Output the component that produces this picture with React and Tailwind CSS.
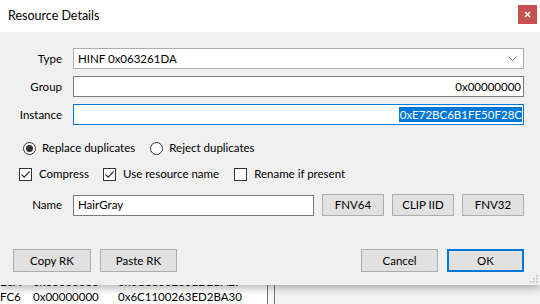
import React from 'react';

const font = { fontFamily: 'Lato, "Liberation Sans", sans-serif' };

const Field = ({ label, children }) => {
  return (
    <div className="flex items-center h-[21px]">
      <div className="w-[62px] text-right text-[11.5px] text-black">{label}</div>
      <div className="flex-1 ml-[11px] h-full">{children}</div>
    </div>
  );
};

const Radio = ({ checked, label, className }) => (
  <div className={`flex items-center ${className || ''}`}>
    <div className="w-[13px] h-[13px] rounded-full border border-[#333] bg-white flex items-center justify-center">
      {checked && <div className="w-[7px] h-[7px] rounded-full bg-[#333]" />}
    </div>
    <span className="ml-[6px] text-[11.5px] text-black">{label}</span>
  </div>
);

const Check = ({ checked, label, className }) => (
  <div className={`flex items-center ${className || ''}`}>
    <div className="w-[13px] h-[13px] border border-[#333] bg-white flex items-center justify-center">
      {checked && (
        <svg width="11" height="11" viewBox="0 0 11 11">
          <path d="M1.5 5.5 L4.2 8.2 L9.5 2.5" fill="none" stroke="#333" strokeWidth="1.2" />
        </svg>
      )}
    </div>
    <span className="ml-[7px] text-[11.5px] text-black">{label}</span>
  </div>
);

const Btn = ({ children, className, focused }) => (
  <button
    className={`h-full flex items-center justify-center text-[11.5px] text-black bg-[#e1e1e1] ${
      focused ? 'border-2 border-[#0078d7]' : 'border border-[#adadad]'
    } ${className || ''}`}
  >
    {children}
  </button>
);

const Row = ({ a, b, c }) => (
  <div className="flex items-center h-[15px] text-[11.5px] text-black whitespace-nowrap">
    <span className="w-[33px]">{a}</span>
    <span className="w-[85px]">{b}</span>
    <span className="w-[149px]">{c}</span>
    <div className="w-[1px] h-full bg-[#777]" />
    <div className="w-[6px] h-full bg-[#f7f7f7]" />
    <div className="w-[1px] h-full bg-[#777]" />
    <div className="flex-1 h-full bg-[#f3f3f3]" />
  </div>
);

export default function App() {
  return (
    <div className="relative w-[540px] h-[304px] overflow-hidden bg-white" style={font}>
      {/* window behind the dialog */}
      <div className="flex flex-col justify-end h-full pb-[-2px]">
        <Row a="E8A" b="0x00000000" c="0x6C1100263ED2BA2F" />
        <Row a="FC6" b="0x00000000" c="0x6C1100263ED2BA30" />
      </div>

      {/* dialog */}
      <div className="absolute top-0 left-0 w-[540px] h-[285px] flex flex-col bg-[#f0f0f0] shadow-[0_3px_8px_rgba(0,0,0,0.3)]">
        <div className="h-[32px] bg-white flex items-center justify-between">
          <span className="ml-[8px] text-[12.5px] text-black">Resource Details</span>
          <div className="mr-[3px] mb-[4px] w-[19px] h-[19px] bg-[#c75050] flex items-center justify-center">
            <svg width="7" height="7" viewBox="0 0 7 7">
              <path d="M1 1 L6 6 M6 1 L1 6" stroke="#fff" strokeWidth="1.6" />
            </svg>
          </div>
        </div>

        <div className="flex flex-col pr-[16px] pt-[16px]">
          <Field label="Type">
            <div className="h-full bg-white border border-[#acacac] flex items-center justify-between pl-[4px] pr-[6px]">
              <span className="text-[11.5px] text-black">HINF 0x063261DA</span>
              <svg width="9" height="5" viewBox="0 0 9 5">
                <path d="M0.5 0.5 L4.5 4.5 L8.5 0.5" fill="none" stroke="#777" strokeWidth="1" />
              </svg>
            </div>
          </Field>
          <div className="mt-[7px]">
            <Field label="Group">
              <div className="h-full bg-white border border-[#7a7a7a] flex items-center justify-end pr-[2px]">
                <span className="text-[11.5px] text-black">0x00000000</span>
              </div>
            </Field>
          </div>
          <div className="mt-[7px]">
            <Field label="Instance">
              <div className="h-full bg-white border border-[#0078d7] flex items-center justify-end pr-[1px]">
                <span className="text-[11.5px] text-white bg-[#0078d7] leading-[15px] pl-[1px]">0xE72BC6B1FE50F28C</span>
              </div>
            </Field>
          </div>

          <div className="flex items-center h-[16px] mt-[15px] pl-[23px]">
            <Radio checked label="Replace duplicates" />
            <Radio label="Reject duplicates" className="ml-[15px]" />
          </div>

          <div className="flex items-center h-[16px] mt-[10px] pl-[19px]">
            <Check checked label="Compress" />
            <Check checked label="Use resource name" className="ml-[14px]" />
            <Check label="Rename if present" className="ml-[15px]" />
          </div>

          <div className="flex items-center h-[22px] mt-[12px]">
            <div className="w-[62px] text-right text-[11.5px] text-black">Name</div>
            <div className="ml-[11px] w-[241px] h-[21px] bg-white border border-[#7a7a7a] flex items-center pl-[4px]">
              <span className="text-[11.5px] text-black">HairGray</span>
            </div>
            <Btn className="ml-[8px] w-[62px]">FNV64</Btn>
            <Btn className="ml-[8px] w-[62px]">CLIP IID</Btn>
            <Btn className="ml-[8px] w-[62px]">FNV32</Btn>
          </div>

          <div className="flex items-center h-[23px] mt-[33px] pl-[13px]">
            <Btn className="w-[78px]">Copy RK</Btn>
            <Btn className="ml-[9px] w-[77px]">Paste RK</Btn>
            <div className="flex-1" />
            <Btn className="w-[77px]">Cancel</Btn>
            <Btn focused className="ml-[9px] w-[77px]">OK</Btn>
          </div>
        </div>

        <div className="flex-1 flex justify-end items-end pr-[2px] pb-[2px]">
          <svg width="9" height="9" viewBox="0 0 9 9">
            <rect x="7" y="1" width="1.5" height="1.5" fill="#b8b8b8" />
            <rect x="4" y="4" width="1.5" height="1.5" fill="#b8b8b8" />
            <rect x="7" y="4" width="1.5" height="1.5" fill="#b8b8b8" />
            <rect x="1" y="7" width="1.5" height="1.5" fill="#b8b8b8" />
            <rect x="4" y="7" width="1.5" height="1.5" fill="#b8b8b8" />
            <rect x="7" y="7" width="1.5" height="1.5" fill="#b8b8b8" />
          </svg>
        </div>
      </div>
    </div>
  );
}
